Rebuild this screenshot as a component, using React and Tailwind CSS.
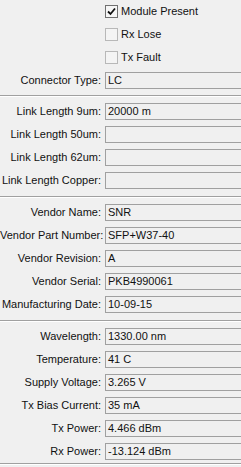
import React from "react";

const font = { fontFamily: '"Liberation Sans", Arial, sans-serif' };

function Check({ checked, label }) {
  return (
    <div className="flex h-[23px] items-center">
      <div className="w-[105px] shrink-0" />
      <div
        className={
          "flex h-[13px] w-[13px] shrink-0 items-center justify-center border " +
          (checked ? "border-[#707070] bg-[#f6f6f6]" : "border-[#b8b8b8] bg-[#f4f4f4]")
        }
      >
        {checked && (
          <svg width="9" height="9" viewBox="0 0 9 9">
            <path d="M1 4.5 L3.5 7 L8 1.5" fill="none" stroke="#111" strokeWidth="1.8" />
          </svg>
        )}
      </div>
      <span className="ml-[3px] text-[11px] leading-none text-[#111]">{label}</span>
    </div>
  );
}

function Row({ label, value }) {
  return (
    <div className="flex h-[23px] items-center">
      <div className="w-[102px] shrink-0 whitespace-nowrap pr-[1px] text-right text-[11px] leading-none text-[#111]">
        {label}
      </div>
      <div className="ml-[3px] flex h-[17px] flex-1 items-center border border-r-0 border-[#a0a0a0] bg-[#f0f0f0] pl-[2px] text-[11px] leading-none text-[#111]">
        {value}
      </div>
    </div>
  );
}

function Sep({ tall }) {
  return (
    <div className={"flex items-center " + (tall ? "h-[9px]" : "h-[8px]")}>
      <div className="h-[2px] w-full border-t border-b border-t-[#a0a0a0] border-b-white" />
    </div>
  );
}

export default function App() {
  return (
    <div className="h-[467px] w-[241px] overflow-hidden bg-[#f0f0f0]" style={font}>
      <Check checked label="Module Present" />
      <Check label="Rx Lose" />
      <Check label="Tx Fault" />
      <Row label="Connector Type:" value="LC" />
      <Sep />
      <Row label="Link Length 9um:" value="20000 m" />
      <Row label="Link Length 50um:" value="" />
      <Row label="Link Length 62um:" value="" />
      <Row label="Link Length Copper:" value="" />
      <Sep tall />
      <Row label="Vendor Name:" value="SNR" />
      <Row label="Vendor Part Number:" value="SFP+W37-40" />
      <Row label="Vendor Revision:" value="A" />
      <Row label="Vendor Serial:" value="PKB4990061" />
      <Row label="Manufacturing Date:" value="10-09-15" />
      <Sep tall />
      <Row label="Wavelength:" value="1330.00 nm" />
      <Row label="Temperature:" value="41 C" />
      <Row label="Supply Voltage:" value="3.265 V" />
      <Row label="Tx Bias Current:" value="35 mA" />
      <Row label="Tx Power:" value="4.466 dBm" />
      <Row label="Rx Power:" value="-13.124 dBm" />
      <div className="h-[2px] w-full border-t border-b border-t-[#a0a0a0] border-b-white" />
    </div>
  );
}
